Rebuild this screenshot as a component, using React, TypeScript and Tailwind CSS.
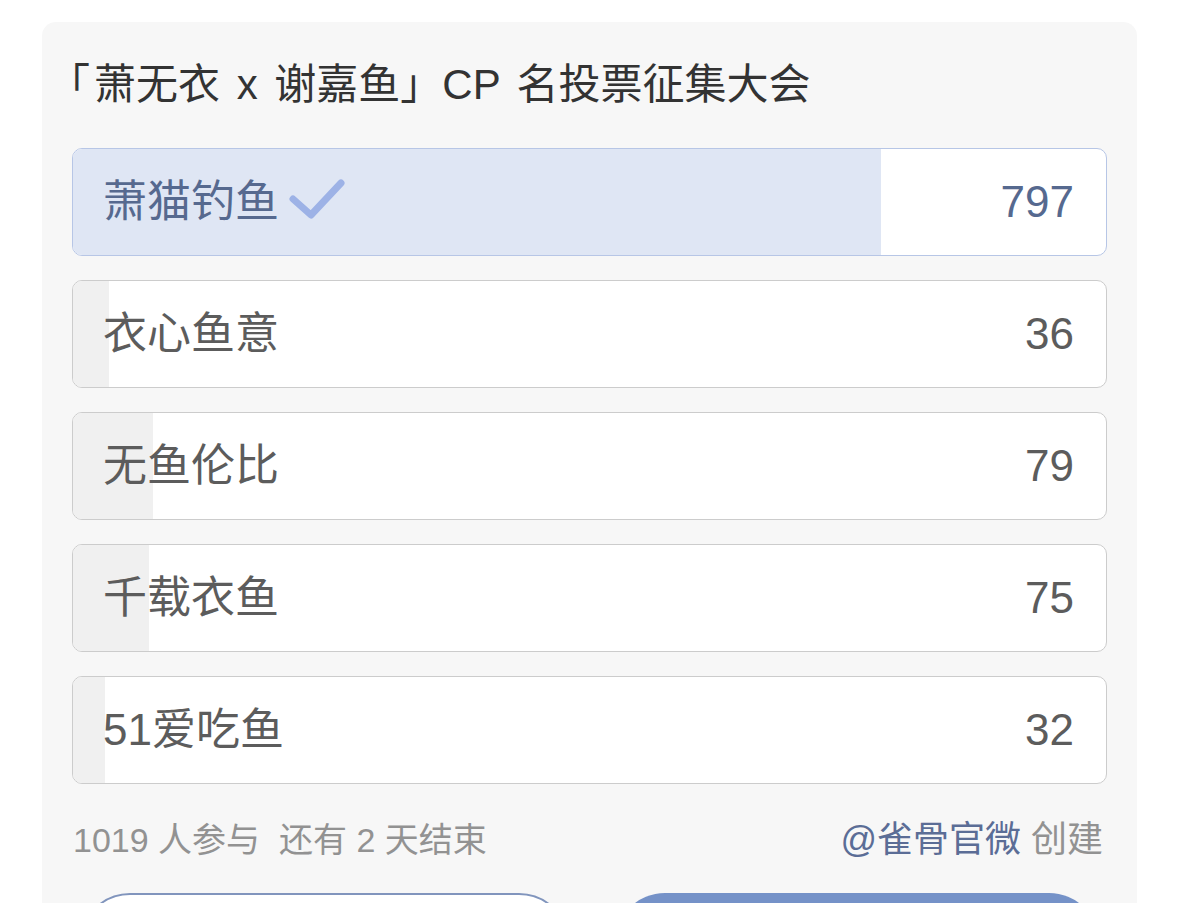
import React from "react";

const options = [
  { label: "萧猫钓鱼", count: 797, selected: true },
  { label: "衣心鱼意", count: 36 },
  { label: "无鱼伦比", count: 79 },
  { label: "千载衣鱼", count: 75 },
  { label: "51爱吃鱼", count: 32 },
];
const total = 1019;

const font = { fontFamily: '"Liberation Sans", "Noto Sans CJK SC", sans-serif' };

export default function App() {
  return (
    <div className="w-[1179px] h-[903px] overflow-hidden bg-white" style={font}>
      <div className="ml-[42px] mt-[22px] w-[1095px] h-[1000px] rounded-[14px] bg-[#f7f7f7] px-[30px] pt-[36px]">
        <div className="text-[42px] leading-[54px] text-[#333] [word-spacing:5px]">
          <span className="-ml-[24px] mr-[4px]">「</span>萧无衣 x 谢嘉鱼」CP 名投票征集大会
        </div>
        <div className="mt-[36px] flex flex-col gap-[24px]">
          {options.map((o) => (
            <div
              key={o.label}
              className={`relative h-[108px] rounded-[10px] border overflow-hidden bg-white ${o.selected ? "border-[#b7c6e6]" : "border-[#cccccc]"}`}
            >
              <div
                className={`absolute left-0 top-0 bottom-0 ${o.selected ? "bg-[#dfe6f4]" : "bg-[#f0f0f0]"}`}
                style={{ width: `${(o.count / total) * 100}%` }}
              />
              <div className="relative flex h-full items-center justify-between pl-[30px] pr-[32px]">
                <div className={`flex items-center text-[44px] ${o.selected ? "text-[#56698f]" : "text-[#5c5c5c]"}`}>
                  <span>{o.label}</span>
                  {o.selected && (
                    <svg width="58" height="46" viewBox="0 0 58 46" className="ml-[10px] -mt-[4px]">
                      <path d="M4 22 L22 38 L52 6" fill="none" stroke="#9db2e6" strokeWidth="7" strokeLinecap="round" strokeLinejoin="round" />
                    </svg>
                  )}
                </div>
                <div className={`text-[44px] ${o.selected ? "text-[#56698f]" : "text-[#5c5c5c]"}`}>{o.count}</div>
              </div>
            </div>
          ))}
        </div>
        <div className="mt-[34px] flex items-center justify-between leading-[44px] text-[#929292]">
          <div className="pl-[1px] text-[34px]">1019 人参与&nbsp;&nbsp;还有 2 天结束</div>
          <div className="pr-[4px] text-[36px]">
            <span className="text-[#5b6d96]">@雀骨官微</span> 创建
          </div>
        </div>
        <div className="mt-[31px] flex gap-[46px] px-[8px]">
          <div className="h-[100px] flex-1 rounded-full border-2 border-[#8195bd] bg-white" />
          <div className="h-[100px] flex-1 rounded-full bg-[#7592c8]" />
        </div>
      </div>
    </div>
  );
}
